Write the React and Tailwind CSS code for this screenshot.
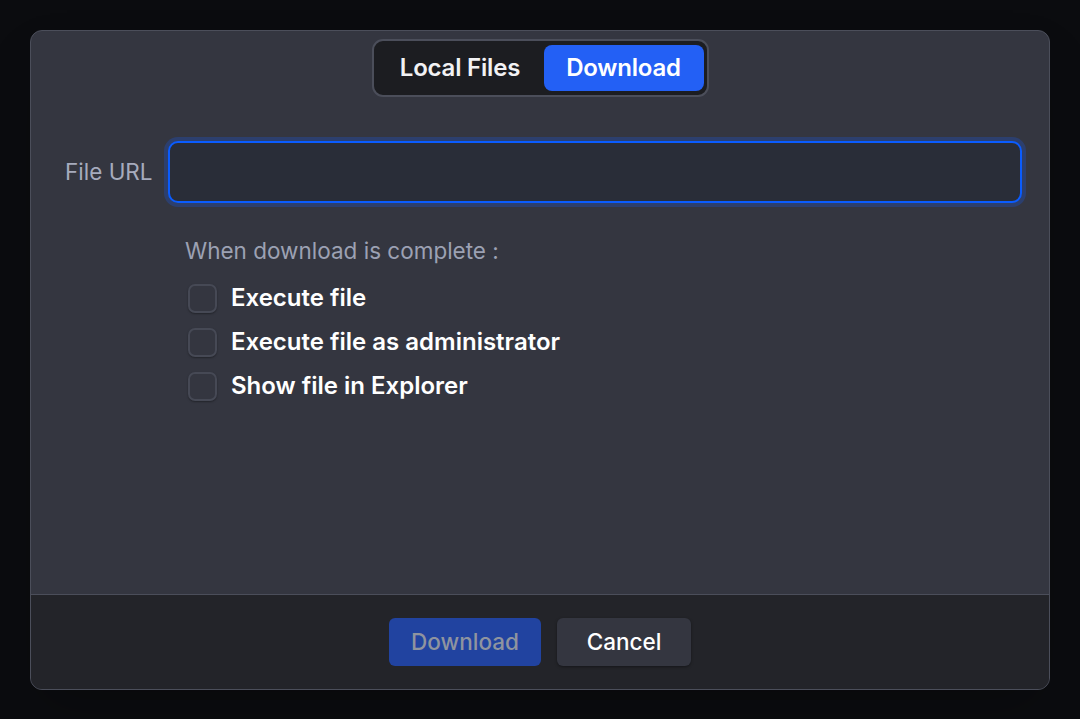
import { useState } from 'react';

const options = [
  { id: 'exec', label: 'Execute file' },
  { id: 'admin', label: 'Execute file as administrator' },
  { id: 'explorer', label: 'Show file in Explorer' },
];

export default function App() {
  const [tab, setTab] = useState('download');
  const [checked, setChecked] = useState({});

  return (
    <div
      className="w-[1080px] h-[719px] bg-[#0b0c0f] pt-[30px] pl-[30px]"
      style={{ fontFamily: 'Inter, "Noto Sans", sans-serif' }}
    >
      {/* ── Dialog ───────────────────────────────────────────── */}
      <div className="w-[1020px] h-[660px] rounded-[12px] border border-[#4b4e5a] bg-[#343640] overflow-hidden flex flex-col shadow-2xl">
        <div className="flex-1 flex flex-col">
          {/* Segmented control */}
          <div className="flex justify-center pt-[8px]">
            <div className="flex items-center h-[58px] py-[4px] px-[3px] rounded-[11px] border-2 border-[#4b4e5a] bg-[#1c1d21]">
              <button
                onClick={() => setTab('local')}
                className={`h-full w-[167px] rounded-[8px] text-[24px] font-semibold tracking-[-0.2px] ${tab === 'local' ? 'bg-[#2360f5] text-white' : 'text-[#f2f2f4]'}`}
              >
                Local Files
              </button>
              <button
                onClick={() => setTab('download')}
                className={`h-full w-[160px] rounded-[8px] text-[24px] font-semibold tracking-[-0.2px] ${tab === 'download' ? 'bg-[#2360f5] text-white' : 'text-[#f2f2f4]'}`}
              >
                Download
              </button>
            </div>
          </div>

          {/* File URL */}
          <div className="flex items-center mt-[44px] pl-[34px] pr-[27px]">
            <label className="w-[103px] text-[22.5px] text-[#a6abbd]">File URL</label>
            <input
              className="flex-1 h-[62px] rounded-[10px] border-2 border-[#0a5cff] bg-[#292d38] px-4 text-[20px] text-white outline-none shadow-[0_0_0_4px_rgba(26,86,219,0.3)]"
            />
          </div>

          {/* Options */}
          <div className="pl-[154px] mt-[33px]">
            <p className="text-[22.5px] text-[#9ca1b3] leading-[30px]">When download is complete :</p>
            <div className="mt-[17px] flex flex-col gap-[14px] pl-[3px]">
              {options.map(o => (
                <label key={o.id} className="flex items-center gap-[14px] cursor-pointer h-[30px]">
                  <span
                    onClick={() => setChecked(c => ({ ...c, [o.id]: !c[o.id] }))}
                    className={`w-[29px] h-[29px] rounded-[7px] border-2 border-[#464955] shadow-[0_1px_2px_rgba(0,0,0,0.35)] ${checked[o.id] ? 'bg-[#2360f5]' : 'bg-[#343640]'}`}
                  />
                  <span className="text-[24px] font-semibold text-white">{o.label}</span>
                </label>
              ))}
            </div>
          </div>
        </div>

        {/* ── Footer ───────────────────────────────────────────── */}
        <div className="h-[95px] shrink-0 border-t border-[#4b4e5a] bg-[#232429] flex items-center justify-center gap-[16px]">
          <button className="w-[152px] h-[48px] rounded-[6px] bg-[#2143a0] text-[22.5px] font-medium text-[#8f949f]">
            Download
          </button>
          <button className="w-[134px] h-[48px] rounded-[6px] bg-[#343640] text-[22.5px] font-medium text-white shadow-[0_1px_3px_rgba(0,0,0,0.4)]">
            Cancel
          </button>
        </div>
      </div>
    </div>
  );
}
